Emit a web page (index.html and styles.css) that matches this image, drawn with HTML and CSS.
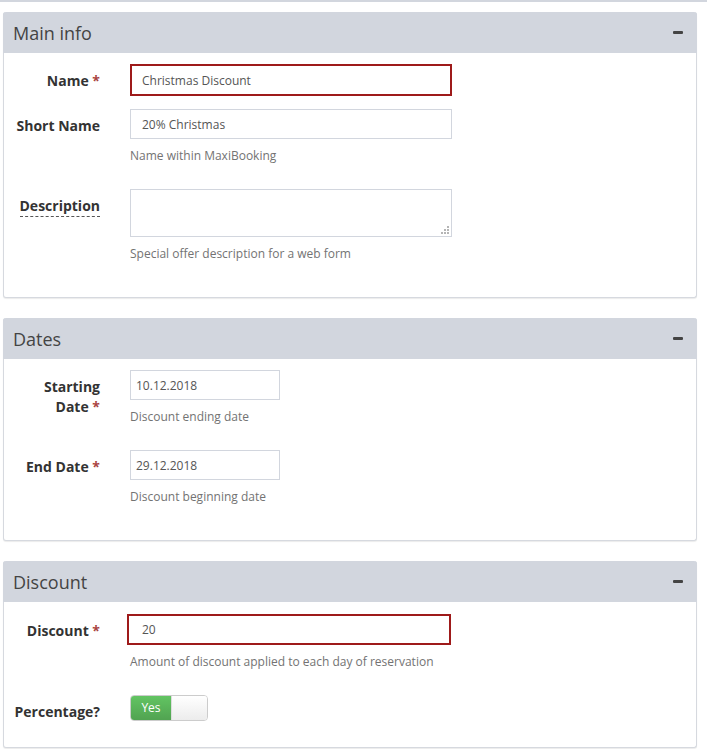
FILE: index.html
```html
<!DOCTYPE html>
<html>
<head>
<meta charset="utf-8">
<link rel="stylesheet" href="styles.css">
</head>
<body>
<div class="topline"></div>
<div class="page">
  <div class="box">
    <div class="box-header">
      <h3 class="box-title">Main info</h3>
      <span class="collapse-btn"></span>
    </div>
    <div class="box-body">
      <div class="form-group">
        <label class="control-label">Name <span class="req">*</span></label>
        <div class="field">
          <input class="form-control wide error" type="text" value="Christmas Discount">
        </div>
      </div>
      <div class="form-group">
        <label class="control-label">Short Name</label>
        <div class="field">
          <input class="form-control wide" type="text" value="20% Christmas">
          <p class="help-block">Name within MaxiBooking</p>
        </div>
      </div>
      <div class="form-group">
        <label class="control-label"><abbr class="dashed">Description</abbr></label>
        <div class="field">
          <div class="textarea-wrap">
            <textarea class="form-control wide textarea"></textarea>
            <svg class="grip" width="8" height="8" viewBox="0 0 8 8">
              <rect x="6" y="0" width="2" height="2" fill="#b5b5b5"/>
              <rect x="3" y="3" width="2" height="2" fill="#b5b5b5"/>
              <rect x="6" y="3" width="2" height="2" fill="#b5b5b5"/>
              <rect x="0" y="6" width="2" height="2" fill="#b5b5b5"/>
              <rect x="3" y="6" width="2" height="2" fill="#b5b5b5"/>
              <rect x="6" y="6" width="2" height="2" fill="#b5b5b5"/>
            </svg>
          </div>
          <p class="help-block">Special offer description for a web form</p>
        </div>
      </div>
    </div>
  </div>

  <div class="box">
    <div class="box-header">
      <h3 class="box-title">Dates</h3>
      <span class="collapse-btn"></span>
    </div>
    <div class="box-body">
      <div class="form-group">
        <label class="control-label">Starting<br>Date <span class="req">*</span></label>
        <div class="field">
          <input class="form-control date" type="text" value="10.12.2018">
          <p class="help-block">Discount ending date</p>
        </div>
      </div>
      <div class="form-group">
        <label class="control-label">End Date <span class="req">*</span></label>
        <div class="field">
          <input class="form-control date" type="text" value="29.12.2018">
          <p class="help-block">Discount beginning date</p>
        </div>
      </div>
    </div>
  </div>

  <div class="box">
    <div class="box-header">
      <h3 class="box-title">Discount</h3>
      <span class="collapse-btn"></span>
    </div>
    <div class="box-body">
      <div class="form-group">
        <label class="control-label label-discount">Discount <span class="req">*</span></label>
        <div class="field">
          <input class="form-control discount error" type="text" value="20">
          <p class="help-block">Amount of discount applied to each day of reservation</p>
        </div>
      </div>
      <div class="form-group">
        <label class="control-label">Percentage?</label>
        <div class="field">
          <div class="switch"><span class="switch-on">Yes</span><span class="switch-off"></span></div>
        </div>
      </div>
    </div>
  </div>
</div>
</body>
</html>
```

FILE: styles.css
```css
* { box-sizing: border-box; }
html, body { margin: 0; padding: 0; background: #fff; }
body {
  font-family: "Open Sans", "DejaVu Sans", sans-serif;
  color: #333;
  font-size: 14px;
}
.topline { height: 2px; background: #d2d6de; }
.page { padding: 10px 0 0 3px; width: 697px; }
.box {
  width: 694px;
  border: 1px solid #d6d9df;
  border-top: 0;
  border-radius: 3px;
  box-shadow: 0 1px 1px rgba(0,0,0,0.08);
  margin-bottom: 20px;
  background: #fff;
}
.box-header {
  height: 41px;
  margin: 0 -1px;
  background: #d2d6de;
  border-radius: 3px 3px 0 0;
  display: flex;
  align-items: center;
  justify-content: space-between;
  padding: 0 14px 0 10px;
}
.box-title {
  margin: 0;
  font-size: 18px;
  font-weight: 400;
  color: #444;
  line-height: 1;
}
.collapse-btn {
  width: 10px;
  height: 3px;
  background: #444;
  border-radius: 1px;
}
.box-body { padding: 11px 10px 10px 0; }
.form-group {
  display: grid;
  grid-template-columns: 96px 1fr;
  column-gap: 30px;
  margin-bottom: 13px;
}
.control-label {
  text-align: right;
  font-weight: 700;
  padding-top: 7px;
  line-height: 20px;
  color: #333;
}
.label-discount { padding-top: 8px; }
.req { color: #a94442; }
.dashed { border-bottom: 1px dashed #555; text-decoration: none; padding-bottom: 1px; }
.field { display: flex; flex-direction: column; align-items: flex-start; }
.form-control {
  font-family: "Open Sans", "DejaVu Sans", sans-serif;
  font-size: 12px;
  color: #555;
  border: 1px solid #d2d6de;
  background: #fff;
  height: 30px;
  padding: 0 11px;
  margin: 0;
  outline: none;
  display: block;
}
.wide { width: 322px; }
.date { width: 150px; padding-left: 5px; }
.error { border: 2px solid #9e1a1a; height: 32px; padding-left: 10px; }
.discount { width: 324px; height: 31px; margin: 1px 0 0 -3px; padding-left: 13px; }
.textarea-wrap { position: relative; }
.textarea { height: 48px; resize: none; }
.grip { position: absolute; right: 3px; bottom: 3px; display: block; }
.help-block {
  margin: 8px 0 12px;
  font-size: 12px;
  line-height: 17px;
  color: #737373;
}
.switch {
  display: flex;
  width: 78px;
  height: 26px;
  border: 1px solid #ccc;
  border-radius: 4px;
  overflow: hidden;
  margin-bottom: 3px;
}
.switch-on {
  width: 40px;
  background: linear-gradient(#62c462, #51a351);
  color: #fff;
  font-size: 12px;
  display: flex;
  align-items: center;
  justify-content: center;
  line-height: 1;
}
.switch-off {
  flex: 1;
  background: linear-gradient(#fff, #ececec);
  border-left: 1px solid #ddd;
}
```
